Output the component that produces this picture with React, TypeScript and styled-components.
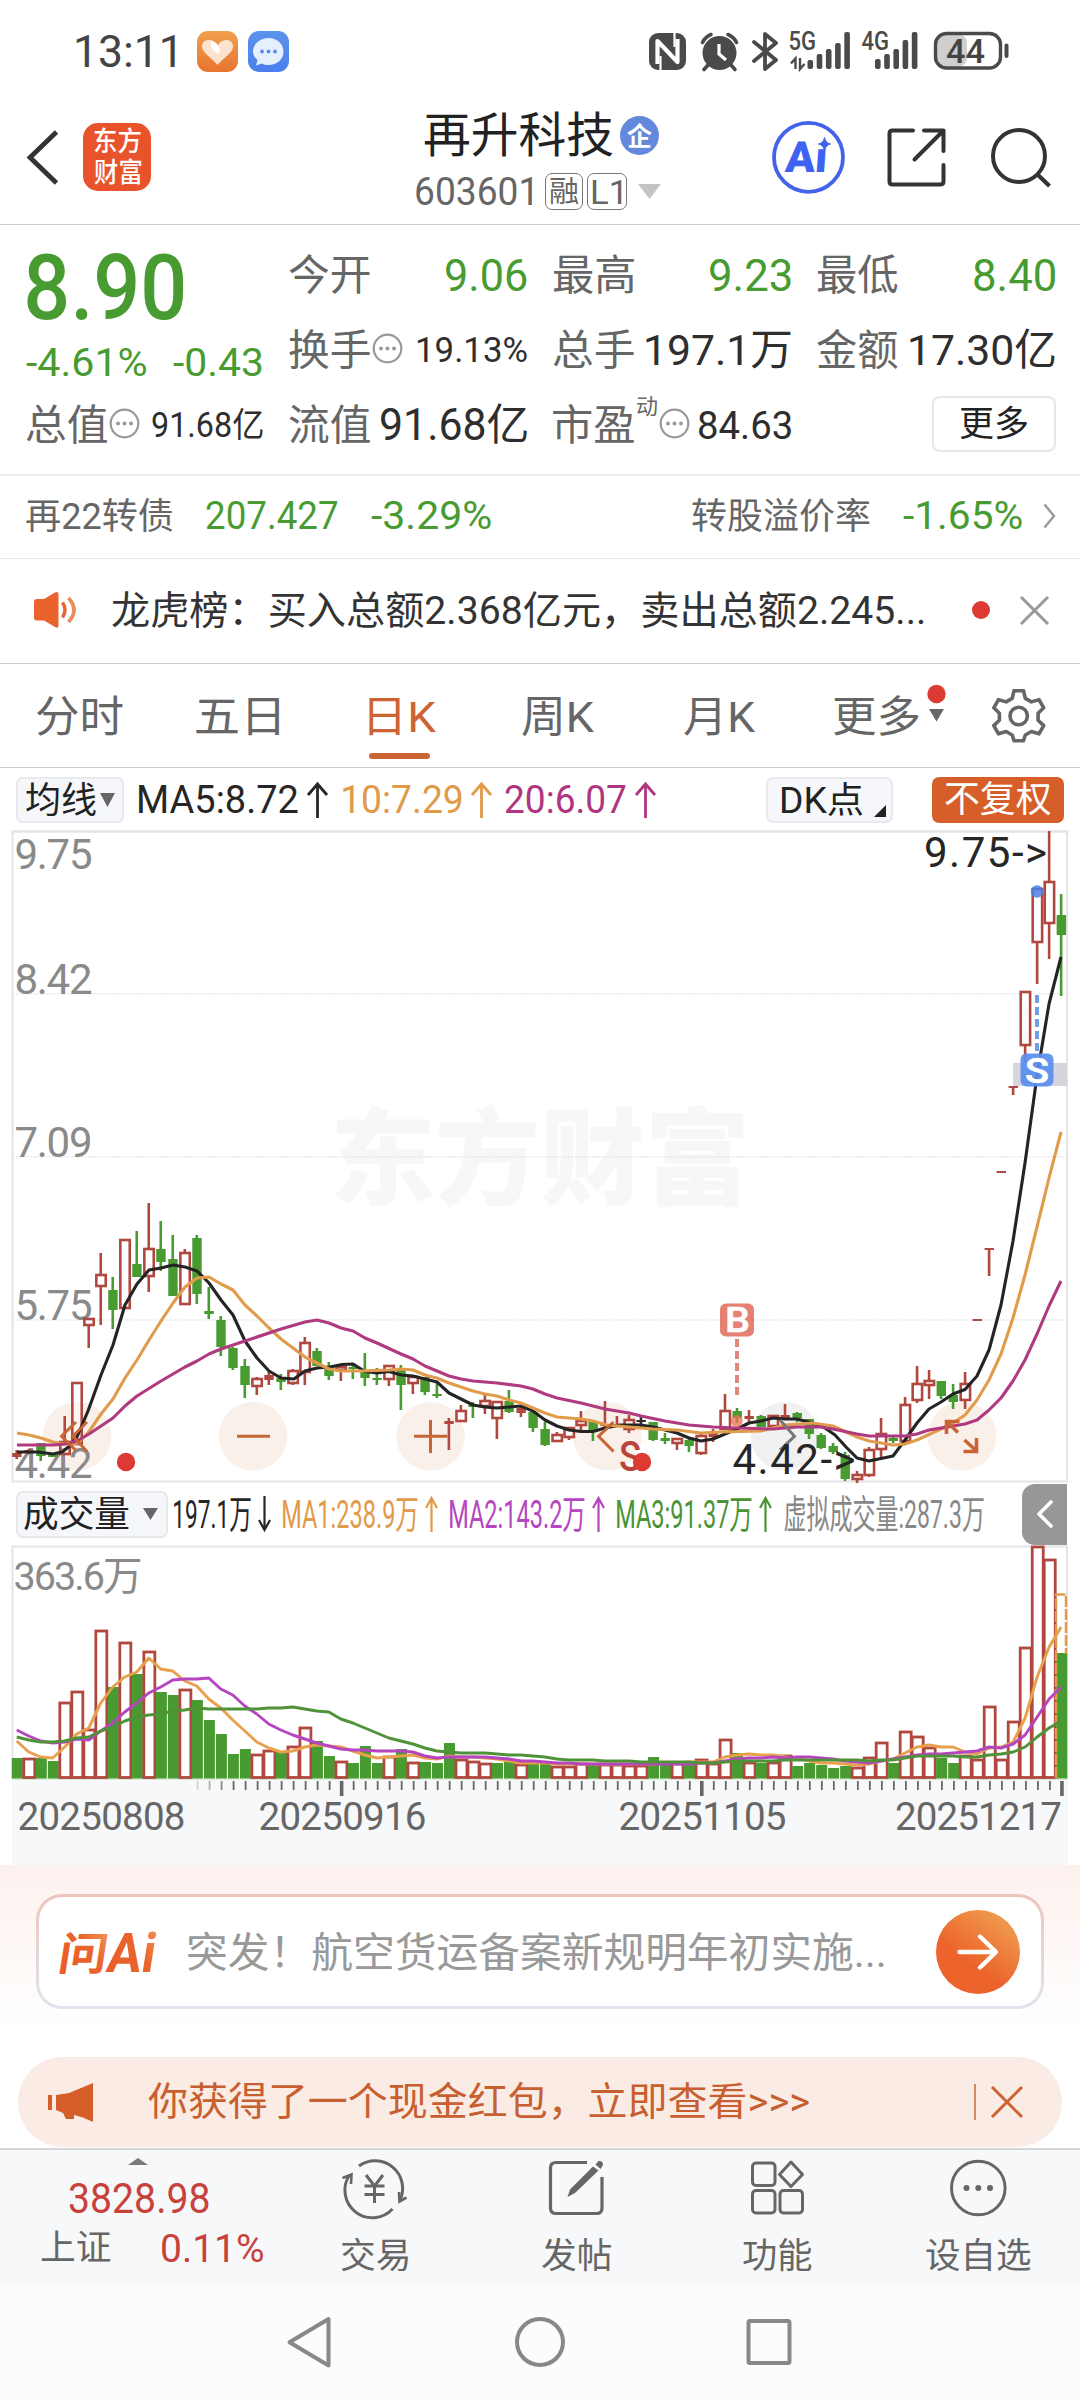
import React, { useLayoutEffect, useRef, useState } from "react";
import styled, { createGlobalStyle } from "styled-components";

const FONT = `Roboto, "Noto Sans CJK SC", sans-serif`;
const GREEN = "#489b30";
const RED = "#b04840";
const GREY = "#666666";
const DARK = "#2b2b2b";

const Global = createGlobalStyle`
  html, body { margin: 0; padding: 0; background: #fff; }
  * { box-sizing: border-box; }
  body { font-family: ${FONT}; width: 1080px; }
  svg { display: block; flex: none; overflow: visible; }
`;

/* ---------- text fitted to a fixed ink width ---------- */

const InkBox = styled.span<{ $w: number; $ml: number; $dy: number }>`
  display: block;
  flex: none;
  width: ${(p) => p.$w}px;
  margin-left: ${(p) => p.$ml}px;
  padding-top: ${(p) => Math.max(p.$dy, 0) * 2}px;
  padding-bottom: ${(p) => Math.max(-p.$dy, 0) * 2}px;
`;
const InkRun = styled.span<{ $size: number; $color: string; $weight: number; $family: string }>`
  display: inline-block;
  vertical-align: top;
  white-space: pre;
  line-height: 1;
  transform-origin: 0 50%;
  font: ${(p) => p.$weight} ${(p) => p.$size}px / 1 ${(p) => p.$family};
  color: ${(p) => p.$color};
`;

type InkProps = {
  children: string;
  size: number;
  w: number;
  ml?: number;
  dy?: number;
  color?: string;
  weight?: number;
  family?: string;
};

function Ink({ children, size, w, ml = 0, dy = 1, color = DARK, weight = 400, family = FONT }: InkProps) {
  const ref = useRef<HTMLSpanElement>(null);
  const [tf, setTf] = useState("none");
  useLayoutEffect(() => {
    const ctx = document.createElement("canvas").getContext("2d");
    if (!ctx || !ref.current) return;
    ctx.font = `${weight} ${size}px ${family}`;
    const m = ctx.measureText(children);
    const s = w / (m.actualBoundingBoxLeft + m.actualBoundingBoxRight);
    setTf(`translateX(${m.actualBoundingBoxLeft * s}px) scaleX(${s})`);
  }, [children, size, w, weight, family]);
  return (
    <InkBox $w={w} $ml={ml} $dy={dy}>
      <InkRun ref={ref} $size={size} $color={color} $weight={weight} $family={family} style={{ transform: tf }}>
        {children}
      </InkRun>
    </InkBox>
  );
}

/* ---------- drawings ---------- */

const Art = styled.svg<{ $ml?: number; $mb?: number; $mt?: number }>`
  margin-left: ${(p) => p.$ml ?? 0}px;
  margin-bottom: ${(p) => p.$mb ?? 0}px;
  margin-top: ${(p) => p.$mt ?? 0}px;
  fill: none;
`;
type PicProps = { box: [number, number, number, number]; ml?: number; mb?: number; mt?: number; children: React.ReactNode };
const Pic = ({ box, ml, mb, mt, children }: PicProps) => (
  <Art $ml={ml} $mb={mb} $mt={mt} width={box[2]} height={box[3]} viewBox={box.join(" ")}>
    {children}
  </Art>
);

const Arrow = ({ color, down, ml, w = 21 }: { color: string; down?: boolean; ml: number; w?: number }) => (
  <Pic box={[0, 0, w, 36]} ml={ml}>
    <g stroke={color} strokeWidth={w > 15 ? 2.8 : 2.2} transform={down ? "rotate(180 " + w / 2 + " 18)" : undefined}>
      <path d={`M${w / 2} 36V3M1 ${w > 15 ? 13 : 12}L${w / 2} 2L${w - 1} ${w > 15 ? 13 : 12}`} />
    </g>
  </Pic>
);

const Info = ({ ml = 2 }: { ml?: number }) => (
  <Pic box={[0, 0, 31, 31]} ml={ml} mb={3}>
    <circle cx="15.5" cy="15.5" r="13.8" stroke="#999" strokeWidth="2.2" />
    <g fill="#999">
      <circle cx="9" cy="15.5" r="2" />
      <circle cx="15.5" cy="15.5" r="2" />
      <circle cx="22" cy="15.5" r="2" />
    </g>
  </Pic>
);

/* ---------- layout parts ---------- */

const Screen = styled.main`
  width: 1080px;
  height: 2400px;
  overflow: hidden;
  background: #fff;
  display: flex;
  flex-direction: column;
`;
const Row = styled.div<{ $h: number; $line?: string; $pl?: number; $pb?: number; $pt?: number }>`
  display: flex;
  flex: none;
  align-items: center;
  height: ${(p) => p.$h}px;
  padding: ${(p) => p.$pt ?? 0}px 0 ${(p) => p.$pb ?? 0}px ${(p) => p.$pl ?? 0}px;
  border-bottom: ${(p) => (p.$line ? `1px solid ${p.$line}` : "none")};
`;
const Tile = styled.div<{ $from: string; $to: string; $ml: number }>`
  width: 41px;
  height: 41px;
  border-radius: 11px;
  margin-left: ${(p) => p.$ml}px;
  background: linear-gradient(${(p) => p.$from}, ${(p) => p.$to});
`;
const Logo = styled.div`
  width: 68px;
  height: 68px;
  margin-left: 25px;
  border-radius: 15px;
  background: #e9532b;
  display: flex;
  flex-direction: column;
  align-items: center;
  justify-content: center;
  gap: 2px;
`;
const TitleBlock = styled.div`
  width: 246px;
  height: 122px;
  margin: 12px 0 0 264px;
  padding-top: 4px;
`;
const TitleLine = styled.div<{ $pl: number }>`
  display: flex;
  align-items: center;
  height: 56px;
  padding-left: ${(p) => p.$pl}px;
`;
const Badge = styled.div`
  width: 39px;
  height: 39px;
  margin-left: 7px;
  margin-top: 3px;
  border-radius: 50%;
  background: #6489dc;
  display: flex;
  align-items: center;
  justify-content: center;
`;
const Tag = styled.div<{ $w: number; $ml: number }>`
  width: ${(p) => p.$w}px;
  height: 37px;
  margin-left: ${(p) => p.$ml}px;
  margin-top: 2px;
  border: 1.5px solid #777;
  border-radius: 7px;
  display: flex;
  align-items: center;
  justify-content: center;
`;
const Quote = styled.section`
  flex: none;
  height: 251px;
  padding: 12px 25px 0 26px;
  border-bottom: 2px solid #ececec;
  display: grid;
  grid-template-columns: 237px 238px 238px 238px;
  grid-template-rows: 75px 75px 75px;
  column-gap: 26px;
`;
const Price = styled.div`
  grid-row: span 2;
`;
const Cell = styled.div<{ $h?: number }>`
  display: flex;
  align-items: center;
  height: ${(p) => p.$h ?? 75}px;
`;
const Push = styled.div`
  margin-left: auto;
`;
const More = styled.button`
  width: 124px;
  height: 56px;
  margin: 0 -1px 2px auto;
  padding: 0;
  border: 2px solid #e6e6e8;
  border-radius: 8px;
  background: #fff;
  display: flex;
  align-items: center;
  justify-content: center;
`;
const Dot = styled.i<{ $ml: number }>`
  width: 18px;
  height: 18px;
  margin-left: ${(p) => p.$ml}px;
  border-radius: 50%;
  background: #dc3a32;
`;
const Tab = styled.div<{ $ml: number }>`
  height: 103px;
  margin-left: ${(p) => p.$ml}px;
  display: flex;
  flex-direction: column;
`;
const TabText = styled.div`
  height: 89px;
  padding-top: 15px;
  display: flex;
  align-items: center;
`;
const TabBar = styled.div`
  width: 61px;
  height: 6px;
  border-radius: 3px;
  background: #cd6232;
`;
const Chip = styled.div<{ $w: number; $ml: number; $pl: number; $solid?: boolean; $h?: number }>`
  width: ${(p) => p.$w}px;
  height: ${(p) => p.$h ?? 46}px;
  margin-left: ${(p) => p.$ml}px;
  padding-left: ${(p) => p.$pl}px;
  border: ${(p) => (p.$solid ? "none" : "2px solid #e7e9ed")};
  border-radius: 7px;
  background: ${(p) => (p.$solid ? "#d65f29" : "#f6f7fa")};
  display: flex;
  align-items: center;
`;
const Drawer = styled.div`
  width: 45px;
  height: 61px;
  margin-left: 38px;
  border-radius: 13px 0 0 13px;
  background: #979797;
  display: flex;
  align-items: center;
  justify-content: center;
`;
const Ask = styled.section`
  flex: none;
  height: 192px;
  padding: 29px 36px 0;
  background: linear-gradient(#fdf1ee 0, #fef8f6 80px, #fff 165px);
`;
const AskCard = styled.div`
  height: 115px;
  border: 3px solid transparent;
  border-radius: 26px;
  background: linear-gradient(#fff, #fff) padding-box, linear-gradient(#edc4bc, #dfe5ee) border-box;
  display: flex;
  align-items: center;
  padding-left: 20px;
`;
const Go = styled.div`
  width: 84px;
  height: 84px;
  margin-left: 52px;
  border-radius: 50%;
  background: linear-gradient(215deg, #efa052 8%, #ec642b 62%);
  display: flex;
  align-items: center;
  justify-content: center;
`;
const Banner = styled.div`
  flex: none;
  width: 1044px;
  height: 90px;
  margin: 0 18px 1px;
  border-radius: 45px;
  background: #faece4;
  display: flex;
  align-items: center;
  padding-left: 30px;
`;
const Rule = styled.div`
  width: 2px;
  height: 36px;
  margin-left: 165px;
  background: #d38a69;
`;
const Nav = styled.nav`
  flex: none;
  height: 136px;
  border-top: 2px solid #d4d6da;
  background: #f7f8fa;
  display: flex;
`;
const Index = styled.div`
  width: 274px;
  padding-top: 8px;
`;
const NavItem = styled.div`
  width: 201.4px;
  padding-top: 9px;
  display: flex;
  flex-direction: column;
  align-items: center;
`;
const NavLabel = styled.div`
  height: 76px;
  padding-top: 20px;
`;
const System = styled.div`
  flex: 1;
  background: #fcfcfc;
  display: flex;
  align-items: center;
`;

/* ---------- market data (pixel space of the plot) ---------- */

const STEP = 12.005;
const cx = (i: number) => 16.7 + i * STEP;

// colour, high, low, body top, body bottom; "R" and "K" are solid bodies
type Candle = [string, number, number, number, number];
const CANDLES: Candle[] = [
  ["R", 1450, 1459, 1453, 1457], ["R", 1449, 1454, 1450, 1453], ["g", 1443, 1461, 1443, 1456], ["g", 1453, 1457, 1455, 1457],
  ["r", 1416, 1455, 1441, 1455], ["r", 1382, 1445, 1382, 1445], ["r", 1318, 1348, 1318, 1326], ["r", 1253, 1325, 1274, 1287],
  ["g", 1277, 1329, 1290, 1310], ["r", 1239, 1309, 1239, 1309], ["g", 1231, 1277, 1264, 1277], ["r", 1203, 1292, 1248, 1277],
  ["g", 1221, 1271, 1249, 1262], ["g", 1235, 1296, 1259, 1296], ["r", 1249, 1305, 1252, 1305], ["g", 1235, 1304, 1238, 1294],
  ["g", 1287, 1319, 1311, 1314], ["g", 1316, 1356, 1320, 1347], ["g", 1347, 1370, 1348, 1368], ["g", 1359, 1398, 1366, 1385],
  ["r", 1377, 1395, 1378, 1387], ["R", 1372, 1385, 1375, 1380], ["g", 1374, 1390, 1378, 1382], ["r", 1369, 1385, 1370, 1384],
  ["r", 1337, 1385, 1342, 1373], ["g", 1348, 1366, 1351, 1366], ["g", 1362, 1380, 1367, 1376], ["r", 1366, 1381, 1366, 1371],
  ["g", 1365, 1379, 1367, 1369], ["g", 1353, 1386, 1372, 1378], ["g", 1368, 1385, 1378, 1380], ["r", 1365, 1386, 1365, 1380],
  ["g", 1365, 1410, 1370, 1385], ["r", 1375, 1394, 1376, 1384], ["g", 1377, 1395, 1377, 1392], ["g", 1383, 1398, 1394, 1396],
  ["R", 1418, 1450, 1421, 1424], ["r", 1405, 1422, 1410, 1422], ["g", 1402, 1418, 1405, 1407], ["r", 1395, 1414, 1400, 1407],
  ["r", 1401, 1439, 1401, 1419], ["g", 1390, 1413, 1401, 1412], ["R", 1406, 1417, 1408, 1413], ["g", 1410, 1432, 1412, 1428],
  ["g", 1422, 1446, 1429, 1445], ["r", 1432, 1442, 1434, 1442], ["r", 1427, 1440, 1427, 1438], ["r", 1411, 1432, 1420, 1426],
  ["g", 1421, 1441, 1421, 1432], ["R", 1401, 1427, 1424, 1426], ["R", 1416, 1427, 1424, 1426], ["r", 1415, 1433, 1419, 1430],
  ["K", 1417, 1427, 1420, 1422], ["g", 1422, 1441, 1422, 1440], ["g", 1433, 1444, 1438, 1441], ["r", 1438, 1450, 1438, 1444],
  ["g", 1439, 1452, 1440, 1446], ["r", 1433, 1455, 1435, 1454], ["R", 1429, 1442, 1433, 1437], ["r", 1394, 1430, 1410, 1430],
  ["g", 1408, 1423, 1411, 1418], ["R", 1410, 1422, 1416, 1419], ["g", 1415, 1427, 1416, 1427], ["r", 1415, 1427, 1415, 1427],
  ["R", 1404, 1418, 1415, 1418], ["g", 1412, 1422, 1413, 1418], ["g", 1419, 1439, 1419, 1434], ["g", 1433, 1449, 1435, 1448],
  ["g", 1443, 1454, 1446, 1452], ["g", 1452, 1481, 1455, 1479], ["r", 1471, 1483, 1474, 1480], ["r", 1447, 1477, 1449, 1476],
  ["r", 1418, 1457, 1433, 1450], ["g", 1437, 1443, 1438, 1441], ["r", 1397, 1442, 1404, 1442], ["r", 1366, 1403, 1383, 1401],
  ["r", 1370, 1399, 1380, 1386], ["g", 1381, 1399, 1381, 1396], ["g", 1384, 1409, 1395, 1402], ["r", 1372, 1409, 1383, 1401],
  ["R", 1319, 1321, 1319, 1321], ["R", 1248, 1276, 1248, 1250], ["R", 1171, 1173, 1171, 1173], ["R", 1086, 1095, 1086, 1088],
  ["r", 991, 1063, 991, 1046], ["r", 888, 984, 888, 943], ["r", 831, 959, 881, 924], ["g", 894, 996, 915, 935],
];

const MA5 = "17,1452 38,1452 53,1454 62,1452 71,1445 77,1437 88,1411 101,1375 113,1345 125,1305 137,1284 149,1270 161,1268 173,1265 185,1267 197,1271 209,1283 221,1300 233,1315 245,1341 257,1358 269,1371 281,1378 294,1379 305,1371 317,1368 330,1367 342,1364.500 353,1364 365,1371.500 377,1373 389,1371.500 401,1375 413,1376 425,1379 437,1382 449,1393 461,1399 473,1405 485,1407 497,1408 509,1407 521,1406 533,1411 545,1420 557,1426 569,1430 581,1431.500 593,1431.500 605,1428 620,1425 641,1425 653,1427 665,1430 677,1433 689,1438 701,1441 713,1439 725,1434 737,1429 749,1423 761,1421 773,1418 785,1419 797,1419 812,1423 825,1428 835,1435 846,1447 857,1458 869,1461 893,1456 905,1440 917,1423 929,1409 941,1402 953,1394 965,1389.500 977,1376 989,1350 1001,1305 1013,1241 1025,1163 1037,1076 1049,1004 1061,957";
const MA10 = "17,1433 29,1435 41,1438 53,1442 65,1444 78,1443 88,1433 101,1414 113,1399 125,1378 137,1360 149,1340 161,1321 173,1303 185,1287 197,1278 209,1277 221,1284 233,1290 245,1305 257,1316 269,1328 281,1339 293,1348 305,1357 317,1363 329,1369 341,1371 360,1371 389,1370 401,1369 413,1370 425,1375 437,1378 449,1383 473,1391 485,1394 497,1396 509,1400 521,1403 533,1408 545,1413 557,1417 581,1419 593,1421 607,1425 629,1427 653,1429 677,1430 701,1433 720,1432 761,1431 785,1425 812,1423 833,1426 857,1437 869,1441 893,1445 905,1444 917,1440 941,1429 953,1423 965,1415 977,1400 989,1380 1001,1354 1013,1318 1025,1275 1037,1227 1049,1178 1061,1132";
const MA20 = "17,1445 53,1445 65,1444 77,1441 89,1434 101,1426 113,1418 125,1406 137,1396 161,1381 185,1367 197,1361 209,1354 221,1349 245,1341 281,1329 305,1322 317,1320 329,1323 341,1328 353,1331 365,1338 377,1343 401,1354 413,1359 425,1366 449,1376 461,1379 473,1381 497,1383 521,1386 533,1389 545,1394 557,1398 581,1403 605,1409 629,1413 641,1416 665,1421 689,1425 713,1427 737,1428 773,1429 797,1427 821,1427 833,1429 857,1434 869,1436 905,1436 917,1434 929,1430 953,1426 965,1424 977,1420 989,1410 1001,1398 1013,1381 1025,1360 1037,1334 1049,1306 1061,1281";

const VOL_KIND = "grggrrrrgrgrggrgggggrrgrrggrgggrgrgggrrrggrggrrrgrrrrggrgrrrgrgrrgggggrrrgrrrggrrrrrrrrg";
const VOL_TOP = [
  1758, 1758, 1758, 1761, 1702, 1691, 1729, 1630, 1687, 1642, 1674, 1651, 1692, 1695, 1689, 1700, 1720, 1734, 1754, 1749, 1754, 1750,
  1752, 1746, 1727, 1741, 1756, 1761, 1763, 1746, 1763, 1756, 1749, 1762, 1762, 1763, 1743, 1759, 1761, 1763, 1763, 1762, 1764, 1764,
  1764, 1766, 1766, 1763, 1765, 1764, 1764, 1765, 1765, 1757, 1763, 1763, 1763, 1759, 1763, 1739, 1753, 1762, 1763, 1762, 1755, 1766,
  1763, 1765, 1768, 1766, 1767, 1757, 1742, 1763, 1731, 1736, 1747, 1758, 1763, 1755, 1759, 1706, 1759, 1721, 1647, 1546, 1559, 1653,
];
const VMA1 = [
  1741, 1752, 1757, 1758, 1747, 1734, 1728, 1703, 1687, 1677, 1672, 1658, 1669, 1671, 1681, 1686, 1699, 1708, 1720, 1731, 1742, 1748,
  1752, 1751, 1747, 1745, 1746, 1747, 1751, 1755, 1758, 1757, 1756, 1755, 1758, 1759, 1756, 1757, 1757, 1758, 1759, 1761, 1763, 1763,
  1763, 1764, 1764, 1764, 1764, 1764, 1764, 1764, 1764, 1764, 1763, 1763, 1762, 1762, 1762, 1757, 1755, 1754, 1755, 1755, 1757, 1758,
  1761, 1763, 1763, 1764, 1765, 1764, 1761, 1759, 1753, 1747, 1745, 1747, 1747, 1752, 1754, 1748, 1747, 1742, 1718, 1677, 1647, 1627,
];
const VMA2 = [
  1730, 1736, 1741, 1743, 1742, 1739, 1740, 1731, 1723, 1712, 1703, 1693, 1687, 1680, 1679, 1679, 1678, 1689, 1695, 1706, 1714, 1724,
  1730, 1735, 1739, 1743, 1746, 1749, 1750, 1750, 1751, 1751, 1751, 1752, 1756, 1758, 1757, 1757, 1757, 1757, 1758, 1759, 1761, 1761,
  1762, 1763, 1763, 1764, 1764, 1764, 1764, 1764, 1764, 1764, 1764, 1764, 1764, 1763, 1763, 1761, 1759, 1758, 1758, 1757, 1758, 1757,
  1757, 1758, 1759, 1761, 1762, 1763, 1761, 1759, 1757, 1755, 1754, 1754, 1753, 1752, 1751, 1747, 1748, 1744, 1735, 1717, 1699, 1687,
];
const VMA3 = [
  1737, 1740, 1742, 1742, 1741, 1738, 1737, 1731, 1727, 1721, 1717, 1715, 1714, 1711, 1710, 1708, 1709, 1709, 1709, 1709, 1709, 1708,
  1708, 1707, 1709, 1711, 1712, 1719, 1723, 1728, 1733, 1738, 1741, 1744, 1748, 1751, 1752, 1753, 1753, 1753, 1754, 1755, 1755, 1756,
  1757, 1759, 1760, 1760, 1760, 1761, 1761, 1761, 1762, 1762, 1762, 1762, 1762, 1763, 1763, 1762, 1761, 1761, 1761, 1761, 1760, 1760,
  1760, 1760, 1760, 1760, 1760, 1761, 1760, 1760, 1758, 1756, 1756, 1756, 1756, 1757, 1757, 1755, 1754, 1752, 1747, 1737, 1728, 1721,
];
const line = (ys: number[]) => ys.map((y, i) => `${cx(i)},${y}`).join(" ");

function PriceChart() {
  const discs: [number, string][] = [
    [77, "#faf0ea"], [253, "#faf0ea"], [430.5, "#faf0ea"], [607.5, "#faf0ea"], [785, "#f1f1f1"], [962, "#faf0ea"],
  ];
  return (
    <Pic box={[0, 831, 1080, 651]}>
      <text x="330" y="1196" textLength="420" lengthAdjust="spacingAndGlyphs" fontSize="105" fontWeight="900" fill="#f7f7f7" fontFamily={FONT}>东方财富</text>
      <g stroke="#e4e4e4" strokeWidth="2">
        <path d="M12 831.500H1068" strokeWidth="2.500" />
        <path d="M12.500 831V1482M1067 831V1482M12 1481.500H1068" />
        <path d="M13 993.800H1067M13 1156.800H1067M13 1320H1067" strokeDasharray="1.500 1.500" strokeWidth="1.600" />
      </g>
      {discs.map(([x, f]) => (
        <circle key={x} cx={x} cy="1436.300" r="34.300" fill={f} />
      ))}
      <rect x="1013" y="1063" width="54" height="23" fill="#d4d5dd" />
      <g fontFamily={FONT} fontSize="42" fill="#8a8a8a">
        <text x="14.500" y="869" textLength="78">9.75</text>
        <text x="14.500" y="993.500" textLength="78">8.42</text>
        <text x="14.500" y="1156.500" textLength="78">7.09</text>
        <text x="14.500" y="1320" textLength="78">5.75</text>
        <text x="14.500" y="1478" textLength="78">4.42</text>
      </g>
      {CANDLES.map(([k, hi, lo, top, bot], i) => {
        const x = cx(i);
        const c = k === "g" ? GREEN : k === "K" ? DARK : RED;
        const hollow = k === "r";
        return (
          <g key={i} stroke={c} fill={c}>
            {hi < top && <path d={`M${x} ${hi}V${top}`} strokeWidth="2.600" />}
            {lo > bot && <path d={`M${x} ${bot}V${lo}`} strokeWidth="2.600" />}
            {hollow ? (
              <rect x={x - 4.4} y={top + 1} width="9.400" height={Math.max(bot - top - 2, 1)} strokeWidth="2.600" fill="#fff" fillOpacity="0.400" />
            ) : (
              <rect x={x - 4.5} y={top} width="9.400" height={bot - top} stroke="none" />
            )}
          </g>
        );
      })}
      <g strokeWidth="3.100" strokeLinejoin="round">
        <polyline points={MA5} stroke="#242424" />
        <polyline points={MA10} stroke="#e09c4c" />
        <polyline points={MA20} stroke="#b03a80" />
      </g>
      <g stroke="#c96434" strokeWidth="3">
        <path d="M76 1422L61.500 1436.300L76 1450.500M87 1422L73 1436.300L87 1451.500" />
        <path d="M237 1436.300H270" />
        <path d="M414 1436.300H447.500M430.500 1420V1453" />
        <path d="M613.500 1422L598.500 1436.300L613.500 1451.500" />
        <path d="M780 1420L794.500 1436.300L780 1450" stroke="#777" />
        <path d="M946.500 1434V1421.500H959.500M947 1422L958 1432.500M964.500 1440L976 1450.500M963.500 1451.500H976.500V1438" strokeWidth="3.600" />
      </g>
      <text x="619" y="1470.500" fontSize="43" fontWeight="500" fill="#b9443c" fontFamily={FONT} textLength="22" lengthAdjust="spacingAndGlyphs">S</text>
      <circle cx="126" cy="1462" r="9.200" fill="#dc3a32" />
      <circle cx="642" cy="1462" r="9.200" fill="#dc3a32" />
      <path d="M737 1339V1395" stroke="#e0877b" strokeWidth="4" strokeDasharray="8 4" />
      <circle cx="736.800" cy="1421" r="6" fill="#ea6f56" fillOpacity="0.750" />
      <rect x="720" y="1303.500" width="34" height="33" rx="6" fill="#e68072" />
      <text x="725" y="1332.300" fontSize="35" fontWeight="500" fill="#fff" stroke="#fff" strokeWidth="0.600" textLength="25" lengthAdjust="spacingAndGlyphs" fontFamily={FONT}>B</text>
      <path d="M1037 995V1051" stroke="#6f9ee6" strokeWidth="4" strokeDasharray="8 4" />
      <circle cx="1037" cy="891.500" r="6.200" fill="#4b80ea" fillOpacity="0.850" />
      <rect x="1020.500" y="1053.500" width="33" height="33" rx="6" fill="#5a8fee" fillOpacity="0.930" />
      <text x="1025" y="1082.500" fontSize="35" fontWeight="500" fill="#fff" stroke="#fff" strokeWidth="0.600" textLength="24" lengthAdjust="spacingAndGlyphs" fontFamily={FONT}>S</text>
      <g fontFamily={FONT} fontSize="42" fill="#262626">
        <text x="732.500" y="1474" textLength="123">{"4.42->"}</text>
        <text x="924" y="867" textLength="123">{"9.75->"}</text>
      </g>
    </Pic>
  );
}

function VolumeChart() {
  return (
    <Pic box={[0, 1546, 1080, 319]}>
      <rect x="12" y="1780" width="1056" height="85" fill="#f7f8fa" />
      <path d="M12 1546.500H1068M12.500 1546V1779M1067 1546V1779" stroke="#e4e4e4" strokeWidth="2" />
      <path d="M12 1779.200H1068" stroke="#d9ecd2" strokeWidth="1.500" />
      <text x="13.500" y="1589.500" textLength="129" fontSize="39.500" fill="#8a8a8a" fontFamily={FONT}>363.6万</text>
      {VOL_TOP.map((y, i) => {
        const x = cx(i) + 0.6;
        return VOL_KIND[i] === "g" ? (
          <rect key={i} x={x - 5.5} y={y} width="11" height={1778.5 - y} fill={GREEN} />
        ) : (
          <rect key={i} x={x - 5.5} y={y + 1} width="11" height={1776.5 - y} stroke={RED} strokeWidth="2.800" fill="#fff" />
        );
      })}
      <path d="M1056 1778V1594.500H1066V1654" stroke="#e09c4c" strokeWidth="2.500" strokeDasharray="11 2" />
      <g strokeWidth="2.900" strokeLinejoin="round">
        <polyline points={line(VMA1)} stroke="#e8a04c" />
        <polyline points={line(VMA2)} stroke="#b545c0" />
        <polyline points={line(VMA3)} stroke="#4f9238" />
      </g>
      {VOL_TOP.map((_, i) => {
        if (i < 15) return null;
        const major = i % 30 === 27;
        return (
          <path key={i} d={`M${cx(i) + 0.8} 1781V${major ? 1796 : 1790}`} stroke={GREY} strokeWidth={major ? 3.6 : 1.8} strokeOpacity={Math.min(1, (i - 14) / 4)} />
        );
      })}
      <g fontFamily={FONT} fontSize="38.500" fill={GREY}>
        <text x="17.500" y="1829.500" textLength="168">20250808</text>
        <text x="258.500" y="1829.500" textLength="168">20250916</text>
        <text x="618.500" y="1829.500" textLength="168">20251105</text>
        <text x="895" y="1829.500" textLength="167">20251217</text>
      </g>
    </Pic>
  );
}

/* ---------- sections ---------- */

const Bars = ({ x, tops }: { x: number; tops: number[] }) => (
  <g fill="#4a4a4a">
    {tops.map((t, i) => (
      <rect key={i} x={x + i * 9.2} y={t} width="5.600" height={69 - t} rx="2" />
    ))}
  </g>
);

function StatusBar() {
  return (
    <Row $h={102} $pl={76}>
      <Ink size={44} w={99} color="#444">13:11</Ink>
      <Tile $ml={22} $from="#f0a04e" $to="#e87430">
        <Pic box={[0, 0, 41, 41]}>
          <path d="M20.500 34C15 27 5 22 5 15.500C5 11 8.500 8.500 12.500 9C16.500 9.500 19 12 20.500 15C22 12 24.500 9.500 28.500 9C32.500 8.500 36 11 36 15.500C36 22 26 27 20.500 34Z" fill="#fbe3cf" />
          <path d="M14 9.500C19 10 25 18 22 22C20 24 16 19 14 16Z" fill="#fff" />
        </Pic>
      </Tile>
      <Tile $ml={10} $from="#5a93ea" $to="#4b7fee">
        <Pic box={[0, 0, 41, 41]}>
          <path d="M20.500 7C29 7 35.500 13 35.500 20.500C35.500 28.500 29 34 20.500 34C18 34 16 33.500 14 32.500L8 34.500L9.500 29C6.500 26.500 5 24 5 20.500C5 13 12 7 20.500 7Z" fill="#e6effd" />
          <g fill="#5b8bea"><circle cx="14" cy="20.500" r="1.900" /><circle cx="20.500" cy="20.500" r="1.900" /><circle cx="27" cy="20.500" r="1.900" /></g>
        </Pic>
      </Tile>
      <Pic box={[649, 32, 361, 39]} ml={360}>
        <g>
          <rect x="649" y="33" width="37" height="37" rx="9" fill="#4a4a4a" />
          <path d="M657.500 64V41L677.500 62V39" stroke="#fff" strokeWidth="4.200" strokeLinejoin="round" />
          <path d="M660.500 72V56M674.500 31V47" stroke="#fff" strokeWidth="2.200" />
        </g>
        <g>
          <circle cx="719.500" cy="53" r="17" fill="#4a4a4a" />
          <path d="M719 44V54L726 60" stroke="#fff" strokeWidth="3.200" />
          <path d="M702.500 42.500C704.500 38.500 707 36 711 34.500M736.500 42.500C734.500 38.500 732 36 728 34.500M708 65L704 69.500M731 65L735 69.500" stroke="#4a4a4a" strokeWidth="3.600" strokeLinecap="round" />
        </g>
        <path d="M754 42L776 60L765 69V34L776 43L754 61" stroke="#4a4a4a" strokeWidth="3.800" strokeLinejoin="round" strokeLinecap="round" />
        <g fontFamily={FONT} fontWeight="500" fontSize="25.500" fill="#4a4a4a">
          <text x="788.500" y="50" textLength="27.500" lengthAdjust="spacingAndGlyphs">5G</text>
          <text x="861.500" y="50" textLength="27.500" lengthAdjust="spacingAndGlyphs">4G</text>
        </g>
        <path d="M795.500 69V58.500L791 63.500M800 58V69L804.500 64" stroke="#4a4a4a" strokeWidth="2.400" />
        <Bars x={807.5} tops={[60, 54, 49, 43, 32]} />
        <Bars x={875} tops={[59, 54, 49, 40, 32]} />
        <rect x="936" y="34" width="31" height="33" rx="9" fill="#cfcfcf" />
        <rect x="935.500" y="33.500" width="65" height="34.500" rx="11" stroke="#4a4a4a" strokeWidth="3.400" />
        <path d="M1006.500 45.500V56" stroke="#4a4a4a" strokeWidth="4" strokeLinecap="round" />
        <text x="946" y="62.500" fontFamily={FONT} fontWeight="500" fontSize="33" fill="#444" textLength="39" lengthAdjust="spacingAndGlyphs">44</text>
      </Pic>
    </Row>
  );
}

function Header() {
  return (
    <Row $h={123} $line="#cfcfcf" $pl={27} $pb={12}>
      <Pic box={[27, 130, 31, 55]}>
        <path d="M56.500 132L30 157.500L56.500 183" stroke="#333" strokeWidth="4.800" />
      </Pic>
      <Logo>
        <Ink size={27} w={47} color="#fff" weight={500}>东方</Ink>
        <Ink size={27} w={47} color="#fff" weight={500}>财富</Ink>
      </Logo>
      <TitleBlock>
        <TitleLine $pl={8.5}>
          <Ink size={48} w={189} color="#222" dy={1.5}>再升科技</Ink>
          <Badge><Ink size={26} w={25} color="#fff" weight={700}>企</Ink></Badge>
        </TitleLine>
        <TitleLine $pl={1}>
          <Ink size={38.5} w={116} color={GREY} dy={2}>603601</Ink>
          <Tag $w={38} $ml={13}><Ink size={29} w={28} color={GREY}>融</Ink></Tag>
          <Tag $w={41} $ml={4}><Ink size={34} w={30} color={GREY}>L1</Ink></Tag>
          <Pic box={[0, 0, 23, 15]} ml={11} mt={2}><path d="M0 0H23L11.500 15Z" fill="#c4c4c4" /></Pic>
        </TitleLine>
      </TitleBlock>
      <Pic box={[772, 121, 73, 73]} ml={111}>
        <circle cx="808.500" cy="157.300" r="34.500" stroke="#4364ea" strokeWidth="3.800" />
        <text x="784" y="172.500" transform="skewX(-4)" fontFamily={FONT} fontWeight="900" fontSize="43" fill="#3f62f2" dx="12.500" textLength="42" lengthAdjust="spacingAndGlyphs">Ai</text>
        <rect x="817" y="138" width="18" height="11" fill="#fff" />
        <path d="M824.500 137.500Q825.500 143 830.500 144Q825.500 145 824.500 151Q823.500 145 818.500 144Q823.500 143 824.500 137.500Z" fill="#3f62f2" stroke="#3f62f2" strokeWidth="1" />
      </Pic>
      <Pic box={[887, 128, 58, 59]} ml={42}>
        <path d="M913 130.500H892.500Q889.500 130.500 889.500 133.500V181.500Q889.500 184.500 892.500 184.500H940Q943.500 184.500 943.500 181.500V165M924 130.500H943.500V151M943.500 130.500L914.500 159.500" stroke="#333" strokeWidth="4" strokeLinecap="round" strokeLinejoin="round" />
      </Pic>
      <Pic box={[991, 126, 60, 61]} ml={46}>
        <circle cx="1019" cy="155" r="26" stroke="#333" strokeWidth="4" />
        <path d="M1037.500 173.500L1049.500 185" stroke="#333" strokeWidth="4.200" />
      </Pic>
    </Row>
  );
}

type StatProps = { label: string; value: string; vw: number; vs: number; color?: string; info?: boolean };
const Stat = ({ label, value, vw, vs, color = "#2e2e2e", info }: StatProps) => (
  <Cell>
    <Ink size={41.5} w={81} color={GREY} dy={1.5}>{label}</Ink>
    {info && <Info />}
    <Push><Ink size={vs} w={vw} color={color}>{value}</Ink></Push>
  </Cell>
);

function QuoteBoard() {
  return (
    <Quote>
      <Price>
        <Cell $h={98}><Ink size={91} w={157} color={GREEN} weight={500} ml={1} dy={2.5}>8.90</Ink></Cell>
        <Cell $h={52}>
          <Ink size={39} w={120} color={GREEN} dy={2}>-4.61%</Ink>
          <Ink size={39} w={89} ml={27} color={GREEN} dy={2}>-0.43</Ink>
        </Cell>
      </Price>
      <Stat label="今开" value="9.06" vw={81} vs={45} color={GREEN} />
      <Stat label="最高" value="9.23" vw={81} vs={45} color={GREEN} />
      <Stat label="最低" value="8.40" vw={81} vs={45} color={GREEN} />
      <Stat label="换手" value="19.13%" vw={110} vs={35.5} info />
      <Stat label="总手" value="197.1万" vw={145} vs={43} />
      <Stat label="金额" value="17.30亿" vw={145} vs={43} />
      <Stat label="总值" value="91.68亿" vw={111} vs={34.5} info />
      <Stat label="流值" value="91.68亿" vw={146} vs={43.5} />
      <Cell>
        <Ink size={41.5} w={81} color={GREY} dy={1.5}>市盈</Ink>
        <Ink size={22} w={20} ml={3} dy={-18} color={GREY}>动</Ink>
        <Info />
        <Push><Ink size={39.5} w={92} color="#2e2e2e">84.63</Ink></Push>
      </Cell>
      <Cell>
        <More><Ink size={35} w={68} color="#222">更多</Ink></More>
      </Cell>
    </Quote>
  );
}

function Bond() {
  return (
    <Row $h={83} $line="#e8e8e8" $pl={26} $pb={3}>
      <Ink size={36} w={147} color={GREY}>再22转债</Ink>
      <Ink size={38.5} w={131} ml={33} color={GREEN}>207.427</Ink>
      <Ink size={38.5} w={120} ml={34} color={GREEN}>-3.29%</Ink>
      <Ink size={36} w={178} ml={201} color={GREY}>转股溢价率</Ink>
      <Ink size={38.5} w={119} ml={33} color={GREEN}>-1.65%</Ink>
      <Pic box={[0, 0, 13, 26]} ml={21}><path d="M1.500 1.500L11 13L1.500 24.500" stroke="#999" strokeWidth="2.400" /></Pic>
    </Row>
  );
}

function News() {
  return (
    <Row $h={105} $line="#cfcfcf" $pl={34} $pb={2}>
      <Pic box={[34, 592, 44, 36]}>
        <path d="M37 599H44L55 592.500Q58.500 591 58.500 595V625Q58.500 629 55 627L44 620.500H37Q34 620.500 34 617.500V602Q34 599 37 599Z" fill="#ea622c" />
        <path d="M62.500 602.500Q67.500 610 62.500 617.500" stroke="#ea622c" strokeWidth="3.400" />
        <path d="M68.500 598Q79.500 610 68.500 622" stroke="#ea8a55" strokeWidth="3.600" />
      </Pic>
      <Ink size={39} w={812} ml={34} color="#333">龙虎榜：买入总额2.368亿元，卖出总额2.245...</Ink>
      <Dot $ml={48} />
      <Pic box={[0, 0, 29, 29]} ml={30}><path d="M1 1L28 28M28 1L1 28" stroke="#999" strokeWidth="3" /></Pic>
    </Row>
  );
}

function Tabs() {
  const tabs: [string, number, number][] = [
    ["分时", 87, 35.5], ["五日", 83, 73], ["日K", 67, 90.5], ["周K", 72, 86], ["月K", 71, 90], ["更多", 85, 79],
  ];
  return (
    <Row $h={104} $line="#cfcfcf">
      {tabs.map(([t, w, ml]) => (
        <Tab key={t} $ml={ml}>
          <TabText><Ink size={43} w={w} dy={1.5} color={t === "日K" ? "#cd6232" : GREY}>{t}</Ink></TabText>
          {t === "日K" && <TabBar />}
        </Tab>
      ))}
      <Pic box={[927, 684, 19, 37]} ml={8} mb={26}>
        <circle cx="936.500" cy="694" r="9.200" fill="#dc3a32" />
        <path d="M929 709H944L936.500 721.500Z" fill={GREY} />
      </Pic>
      <Pic box={[992, 689, 53, 53]} ml={46}>
        <path d="M1012.200 698.900L1014 691.200H1023.500L1025.300 698.900L1031.400 702.400L1039 700.100L1043.700 708.300L1038.100 713.700V720.700L1043.700 726.100L1039 734.300L1031.400 732L1025.300 735.500L1023.500 741.200H1014L1012.200 735.500L1006.100 732L998.500 734.300L993.800 726.100L999.400 720.700V713.700L993.800 708.300L998.500 700.100L1006.100 702.400Z" transform="translate(0,-.5)" stroke={GREY} strokeWidth="3.600" strokeLinejoin="round" />
        <circle cx="1018.700" cy="716" r="8.700" stroke={GREY} strokeWidth="3.600" />
      </Pic>
    </Row>
  );
}

function Indicators() {
  return (
    <Row $h={63}>
      <Chip $w={108} $ml={16} $pl={8}>
        <Ink size={36} w={70} color="#222">均线</Ink>
        <Pic box={[0, 0, 15, 14]} ml={4}><path d="M0 0H15L7.500 14Z" fill={GREY} /></Pic>
      </Chip>
      <Ink size={39} w={159} ml={15} color="#262626">MA5:8.72</Ink>
      <Arrow color="#262626" ml={9} />
      <Ink size={39} w={119} ml={15} color="#e09a48">10:7.29</Ink>
      <Arrow color="#e09a48" ml={9} />
      <Ink size={39} w={121} ml={13} color="#b0357f">20:6.07</Ink>
      <Arrow color="#b0357f" ml={9} />
      <Chip $w={127} $ml={110} $pl={13}>
        <Ink size={36} w={82} color="#222">DK点</Ink>
        <Pic box={[0, 0, 12, 12]} ml={11} mt={22}><path d="M12 0V12H0Z" fill="#222" /></Pic>
      </Chip>
      <Chip $w={132} $ml={39} $pl={13} $solid>
        <Ink size={36.5} w={106} color="#fff">不复权</Ink>
      </Chip>
    </Row>
  );
}

function VolumeHeader() {
  return (
    <Row $h={64}>
      <Chip $w={152} $ml={16} $pl={6} $h={47}>
        <Ink size={36} w={105} color="#222">成交量</Ink>
        <Pic box={[0, 0, 15, 12]} ml={14}><path d="M0 0H15L7.500 12Z" fill={GREY} /></Pic>
      </Chip>
      <Ink size={38.5} w={77} ml={6} color="#262626">197.1万</Ink>
      <Arrow color="#262626" down ml={7} w={13} />
      <Ink size={38.5} w={135} ml={12} color="#e09a48">MA1:238.9万</Ink>
      <Arrow color="#e09a48" ml={7} w={13} />
      <Ink size={38.5} w={135} ml={12} color="#b545c0">MA2:143.2万</Ink>
      <Arrow color="#b545c0" ml={7} w={13} />
      <Ink size={38.5} w={135} ml={12} color="#4a9436">MA3:91.37万</Ink>
      <Arrow color="#4a9436" ml={7} w={13} />
      <Ink size={38.5} w={200} ml={12} color="#888">虚拟成交量:287.3万</Ink>
      <Drawer>
        <Pic box={[0, 0, 17, 28]}><path d="M15 2L3 14L15 26" stroke="#fff" strokeWidth="3.600" strokeLinecap="round" strokeLinejoin="round" /></Pic>
      </Drawer>
    </Row>
  );
}

function AskBox() {
  return (
    <Ask>
      <AskCard>
        <Pic box={[59, 1930, 98, 44]}>
          <defs>
            <linearGradient id="ask" x1="0" y1="1" x2="1" y2="0">
              <stop offset="0" stopColor="#ec5a26" />
              <stop offset="0.6" stopColor="#ea642c" />
              <stop offset="1" stopColor="#eea066" />
            </linearGradient>
          </defs>
          <g fontFamily={FONT} fontWeight="700" fill="url(#ask)">
            <text transform="translate(56.500 1969.500) skewX(-9)" fontSize="45" textLength="49" lengthAdjust="spacingAndGlyphs">问</text>
            <text transform="translate(105 1972) skewX(-9)" fontSize="55" textLength="48" lengthAdjust="spacingAndGlyphs">Ai</text>
          </g>
        </Pic>
        <Ink size={41} w={696} ml={31} dy={1.5} color="#999">突发！航空货运备案新规明年初实施...</Ink>
        <Go>
          <Pic box={[0, 0, 42, 36]}><path d="M2.500 18H38M23 2.500L39 18L23 33.500" stroke="#fff" strokeWidth="4.400" strokeLinecap="round" strokeLinejoin="round" /></Pic>
        </Go>
      </AskCard>
    </Ask>
  );
}

function RedPacket() {
  return (
    <Banner>
      <Pic box={[48, 2082, 46, 39]}>
        <path d="M48 2094H52V2109H48ZM56 2094L69 2092L93 2082V2121L83 2116.500L74 2114V2118H66L63 2112L56 2109Z" fill="#d65f29" />
      </Pic>
      <Ink size={38.5} w={661} ml={54} dy={0.5} color="#c85f30">{"你获得了一个现金红包，立即查看>>>"}</Ink>
      <Rule />
      <Pic box={[0, 0, 32, 32]} ml={15}><path d="M1 1L31 31M31 1L1 31" stroke="#cc6233" strokeWidth="3" /></Pic>
    </Banner>
  );
}

function BottomNav() {
  return (
    <Nav>
      <Index>
        <Pic box={[0, 0, 20, 7]} ml={128}><path d="M10 0L20 7H0Z" fill="#7a7a7a" /></Pic>
        <Row $h={66}><Ink size={42} w={140} ml={69} color="#c8423c">3828.98</Ink></Row>
        <Row $h={34}>
          <Ink size={35.5} w={70} ml={41} color={GREY}>上证</Ink>
          <Ink size={39} w={101} ml={51} color="#c8423c">0.11%</Ink>
        </Row>
      </Index>
      <NavItem>
        <Pic box={[343, 2159, 65, 58]}>
          <g stroke={GREY} strokeWidth="3">
            <path d="M360 2166A27.500 27.500 0 0 1 401 2200M393.500 2209A27.500 27.500 0 0 1 350.500 2175" />
            <path d="M343.500 2178L352.500 2174.500L352 2184M407.500 2197.500L400.500 2201.500L400 2192" strokeWidth="2.600" />
            <path d="M367 2175L375.500 2186L384 2175M375.500 2186V2203M365.500 2186H385.500M365.500 2194.500H385.500" />
          </g>
        </Pic>
        <NavLabel><Ink size={35.5} w={67} color={GREY}>交易</Ink></NavLabel>
      </NavItem>
      <NavItem>
        <Pic box={[549, 2159, 56, 58]}>
          <path d="M588 2162.500H557Q551.500 2162.500 551.500 2168V2208Q551.500 2213.500 557 2213.500H597.500Q603 2213.500 603 2208V2177" stroke={GREY} strokeWidth="3.200" />
          <path d="M594 2166.500L599.500 2170.500L576 2193L568.500 2197L571 2189.500Z" fill={GREY} />
          <path d="M596.500 2164.500L599.500 2161Q604 2160.500 604 2165L601.500 2169Z" fill={GREY} />
        </Pic>
        <NavLabel><Ink size={35.5} w={69} color={GREY}>发帖</Ink></NavLabel>
      </NavItem>
      <NavItem>
        <Pic box={[752, 2159, 53, 58]}>
          <g stroke={GREY} strokeWidth="3" strokeLinejoin="round">
            <rect x="753.500" y="2163" width="22.500" height="22.500" rx="3.500" />
            <rect x="753.500" y="2190.500" width="22.500" height="22.500" rx="3.500" />
            <rect x="781" y="2190.500" width="22.500" height="22.500" rx="3.500" />
            <path d="M792 2162L803.500 2174.500L792 2186.500L780.500 2174.500Z" />
          </g>
        </Pic>
        <NavLabel><Ink size={35.5} w={69} color={GREY}>功能</Ink></NavLabel>
      </NavItem>
      <NavItem>
        <Pic box={[951, 2159, 57, 58]}>
          <circle cx="979.300" cy="2188" r="26.800" stroke={GREY} strokeWidth="3" />
          <g fill={GREY}><circle cx="967.500" cy="2188" r="3" /><circle cx="979.300" cy="2188" r="3" /><circle cx="991" cy="2188" r="3" /></g>
        </Pic>
        <NavLabel><Ink size={35.5} w={105} color={GREY}>设自选</Ink></NavLabel>
      </NavItem>
    </Nav>
  );
}

export default function App() {
  return (
    <>
      <Global />
      <Screen>
        <StatusBar />
        <Header />
        <QuoteBoard />
        <Bond />
        <News />
        <Tabs />
        <Indicators />
        <PriceChart />
        <VolumeHeader />
        <VolumeChart />
        <AskBox />
        <RedPacket />
        <BottomNav />
        <System>
          <Pic box={[287, 2316, 44, 52]} ml={287}>
            <path d="M328.500 2319V2365.500L289.500 2342.300Z" stroke="#888" strokeWidth="4" strokeLinejoin="round" />
          </Pic>
          <Pic box={[515, 2317, 50, 50]} ml={184}>
            <circle cx="540" cy="2342" r="23" stroke="#888" strokeWidth="4" />
          </Pic>
          <Pic box={[746, 2318, 46, 48]} ml={181}>
            <rect x="748.500" y="2321" width="41" height="42" rx="1.500" stroke="#888" strokeWidth="4" />
          </Pic>
        </System>
      </Screen>
    </>
  );
}
